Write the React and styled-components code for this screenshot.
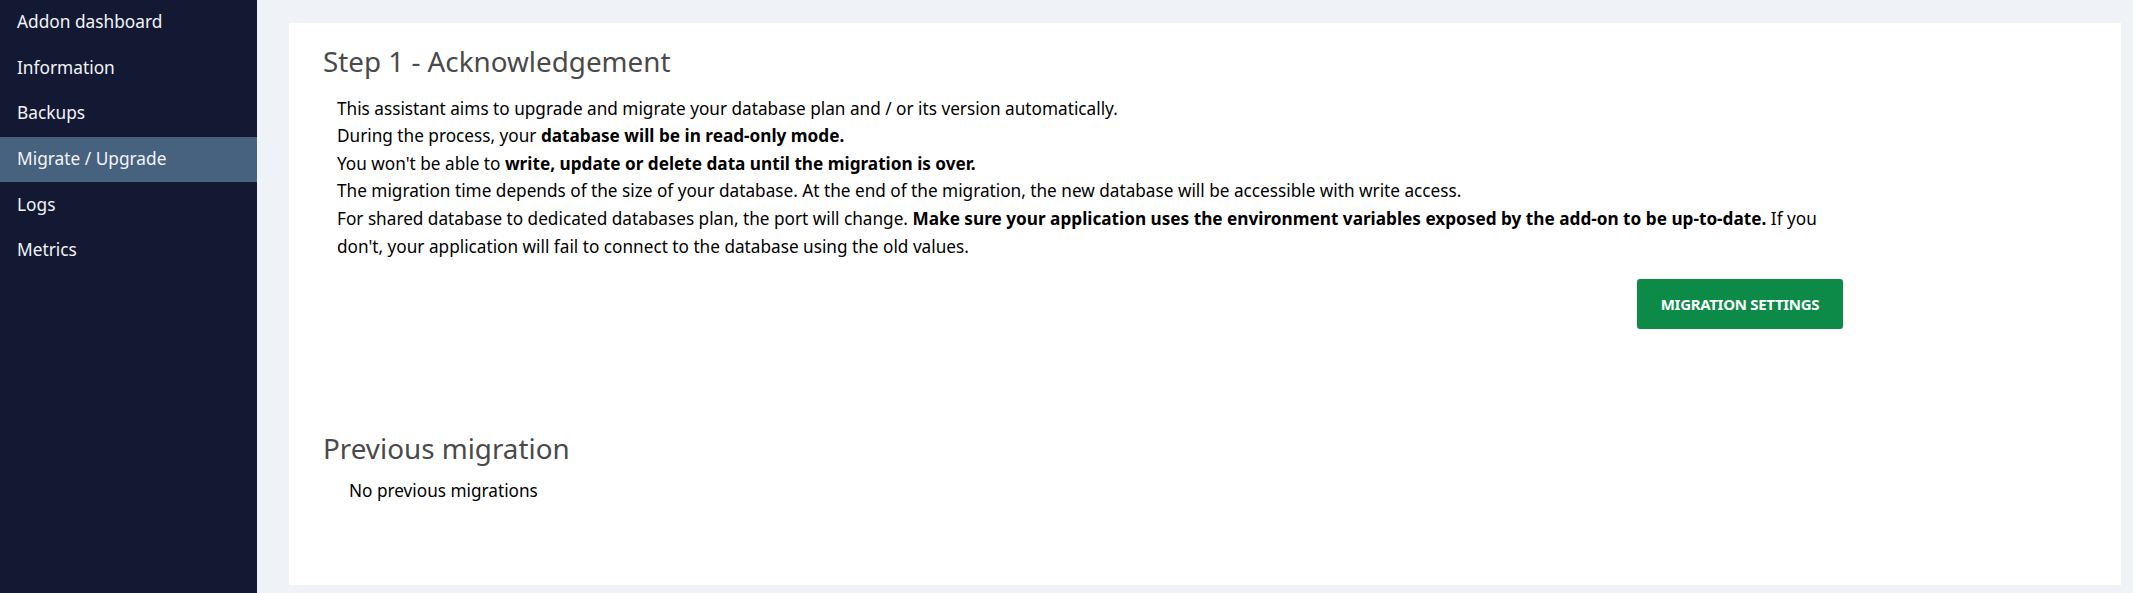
import styled, { createGlobalStyle } from "styled-components";

const GlobalStyle = createGlobalStyle`
  html, body {
    margin: 0;
    padding: 0;
    background: #ffffff;
    font-family: "Noto Sans", "Open Sans", Arial, sans-serif;
  }
  * {
    box-sizing: border-box;
  }
`;

const Layout = styled.div`
  display: flex;
  height: 100vh;
  overflow: hidden;
`;

const Sidebar = styled.nav`
  width: 257px;
  flex-shrink: 0;
  background-color: #131933;
  display: flex;
  flex-direction: column;
`;

const NavItem = styled.a`
  display: flex;
  align-items: center;
  height: 45.6px;
  padding: 0 17px 2px;
  font-size: 17.3px;
  color: #f2f4f8;
  text-decoration: none;
  cursor: pointer;
  background-color: ${(props) => (props.active ? "#46627f" : "transparent")};
`;

const Main = styled.main`
  flex: 1;
  display: flex;
  background-color: #eff2f7;
  padding: 23px 12px 8px 32px;
  margin-right: 8px;
`;

const Card = styled.section`
  flex: 1;
  background-color: #ffffff;
  padding: 22px 34px 0;
`;

const Title = styled.h2`
  margin: 0;
  font-size: 27.8px;
  font-weight: 400;
  line-height: 33.6px;
  color: #4a4a4a;
`;

const Body = styled.div`
  max-width: 1520px;
  padding-left: 14px;
  margin-top: 16px;
  font-size: 17.2px;
  line-height: 27.6px;
  color: #000000;

  p {
    margin: 0;
  }
`;

const Actions = styled.div`
  display: flex;
  justify-content: flex-end;
  margin-top: 19px;
`;

const Button = styled.button`
  height: 50px;
  width: 206px;
  border: none;
  border-radius: 3px;
  background-color: #0c8a47;
  color: #ffffff;
  font-family: inherit;
  font-size: 15px;
  font-weight: 700;
  letter-spacing: -0.3px;
  text-transform: uppercase;
  cursor: pointer;
`;

const History = styled.div`
  margin-top: 103px;
`;

const Empty = styled.p`
  margin: 11px 0 0 26px;
  font-size: 17.2px;
  line-height: 27.6px;
  color: #000000;
`;

const navItems = [
  "Addon dashboard",
  "Information",
  "Backups",
  "Migrate / Upgrade",
  "Logs",
  "Metrics",
];

export default function App() {
  return (
    <>
      <GlobalStyle />
      <Layout>
        <Sidebar>
          {navItems.map((item) => (
            <NavItem key={item} active={item === "Migrate / Upgrade"}>
              {item}
            </NavItem>
          ))}
        </Sidebar>
        <Main>
          <Card>
            <Title>Step 1 - Acknowledgement</Title>
            <Body>
              <p>
                This assistant aims to upgrade and migrate your database plan and / or its
                version automatically.
              </p>
              <p>
                During the process, your <b>database will be in read-only mode.</b>
              </p>
              <p>
                You won't be able to{" "}
                <b>write, update or delete data until the migration is over.</b>
              </p>
              <p>
                The migration time depends of the size of your database. At the end of the
                migration, the new database will be accessible with write access.
              </p>
              <p>
                For shared database to dedicated databases plan, the port will change.{" "}
                <b>
                  Make sure your application uses the environment variables exposed by the
                  add-on to be up-to-date.
                </b>{" "}
                If you don't, your application will fail to connect to the database using the
                old values.
              </p>
              <Actions>
                <Button>Migration settings</Button>
              </Actions>
            </Body>
            <History>
              <Title>Previous migration</Title>
              <Empty>No previous migrations</Empty>
            </History>
          </Card>
        </Main>
      </Layout>
    </>
  );
}
